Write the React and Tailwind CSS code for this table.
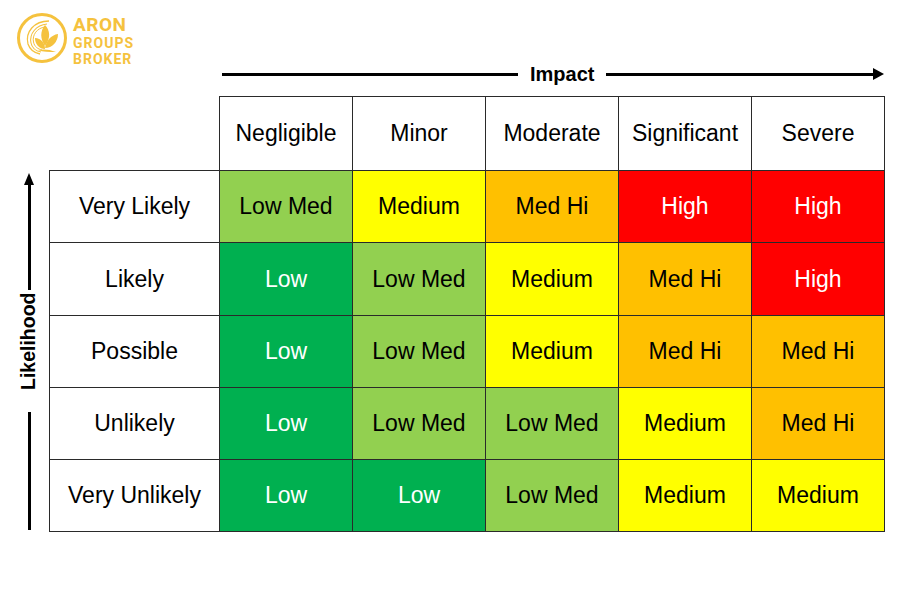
import React from "react";

const TONES = {
  lm: "bg-[#92d050] text-black",
  l: "bg-[#00b050] text-white",
  m: "bg-[#ffff00] text-black",
  mh: "bg-[#ffc000] text-black",
  h: "bg-[#ff0000] text-white",
};

const LABELS = { lm: "Low Med", l: "Low", m: "Medium", mh: "Med Hi", h: "High" };

const impacts = ["Negligible", "Minor", "Moderate", "Significant", "Severe"];

const rows = [
  { name: "Very Likely", cells: ["lm", "m", "mh", "h", "h"] },
  { name: "Likely", cells: ["l", "lm", "m", "mh", "h"] },
  { name: "Possible", cells: ["l", "lm", "m", "mh", "mh"] },
  { name: "Unlikely", cells: ["l", "lm", "lm", "m", "mh"] },
  { name: "Very Unlikely", cells: ["l", "l", "lm", "m", "m"] },
];

function Logo() {
  const gold = "#f5c23e";
  return (
    <div className="flex items-start gap-[5px]">
      <svg width="52" height="52" viewBox="0 0 52 52">
        <circle cx="26" cy="26" r="23.5" fill="none" stroke={gold} strokeWidth="3" />
        {/* swoosh */}
        <path d="M33 9 C18 9 9 20 12 32 C14 38 19 41 24 42" fill="none" stroke={gold} strokeWidth="1.3" />
        <path d="M31 12 C20 13 13 22 15 31 C16 36 20 39 25 40" fill="none" stroke={gold} strokeWidth="1.1" />
        <path d="M29 15 C21 16 16 23 17.5 30 C18.5 35 22 37 26 38" fill="none" stroke={gold} strokeWidth="1" />
        {/* leaves */}
        <path d="M29 13 C34 18 35 26 29 34 C24 27 24 19 29 13 Z" fill={gold} />
        <path d="M42 22 C42 30 36 36 29 36 C30 29 35 23 42 22 Z" fill={gold} />
        <path d="M19 26 C25 26 29 31 29 37 C23 37 19 32 19 26 Z" fill={gold} />
        <path d="M22 38 C27 37 33 37 40 40 C33 40 27 40 22 38 Z" fill={gold} />
      </svg>
      <div className="mt-[3px] flex flex-col font-bold text-[#f5c23e] font-['Roboto','Open_Sans',sans-serif]">
        <span className="text-[19px] leading-[19px] tracking-[0.5px]">ARON</span>
        <span className="mt-[2px] text-[14px] leading-[14px] tracking-[1px]">GROUPS</span>
        <span className="mt-[2px] text-[14px] leading-[14px] tracking-[1px]">BROKER</span>
      </div>
    </div>
  );
}

function ImpactAxis() {
  return (
    <div className="flex items-center h-[20px] ml-[204px]">
      <div className="w-[296px] h-[3px] bg-black" />
      <span className="mx-[12px] text-[20px] font-bold leading-none">Impact</span>
      <div className="w-[268px] h-[3px] bg-black" />
      <svg width="11" height="12" viewBox="0 0 11 12" className="-ml-px">
        <path d="M0 0 L11 6 L0 12 Z" fill="black" />
      </svg>
    </div>
  );
}

function LikelihoodAxis() {
  return (
    <div className="w-[22px] mr-[9px] flex flex-col items-center pt-[3px]">
      <svg width="10" height="12" viewBox="0 0 10 12">
        <path d="M0 12 L5 0 L10 12 Z" fill="black" />
      </svg>
      <div className="w-[3px] h-[106px] bg-black -mt-px" />
      <span className="mt-[3px] h-[97px] flex items-center text-[19.5px] font-bold leading-none [writing-mode:vertical-rl] rotate-180">
        Likelihood
      </span>
      <div className="w-[3px] h-[118px] bg-black mt-[22px]" />
    </div>
  );
}

export default function App() {
  return (
    <div className="w-[900px] h-[600px] bg-white text-black font-['Liberation_Sans',Arial,sans-serif] pt-[12px] pl-[16px]">
      <Logo />

      <div className="ml-[2px] mt-[-2px] flex flex-col">
        <ImpactAxis />

        <div className="flex mt-[12px]">
          <div className="flex flex-col">
            <div className="h-[74px]" />
            <LikelihoodAxis />
          </div>

          <table className="border-collapse table-fixed w-[835px] text-[23px]">
            <colgroup>
              <col className="w-[170px]" />
              {impacts.map((i) => (
                <col key={i} className="w-[133px]" />
              ))}
            </colgroup>
            <thead>
              <tr className="h-[74px]">
                <th className="p-0" />
                {impacts.map((i) => (
                  <th key={i} className="p-0 font-normal text-center border-[1.5px] border-[#2a2a2a]">
                    {i}
                  </th>
                ))}
              </tr>
            </thead>
            <tbody>
              {rows.map((r) => (
                <tr key={r.name} className="h-[72.25px]">
                  <td className="p-0 text-center border-[1.5px] border-[#2a2a2a]">{r.name}</td>
                  {r.cells.map((c, idx) => (
                    <td
                      key={idx}
                      className={`p-0 text-center border-[1.5px] border-[#2a2a2a] ${TONES[c]}`}
                    >
                      {LABELS[c]}
                    </td>
                  ))}
                </tr>
              ))}
            </tbody>
          </table>
        </div>
      </div>
    </div>
  );
}
